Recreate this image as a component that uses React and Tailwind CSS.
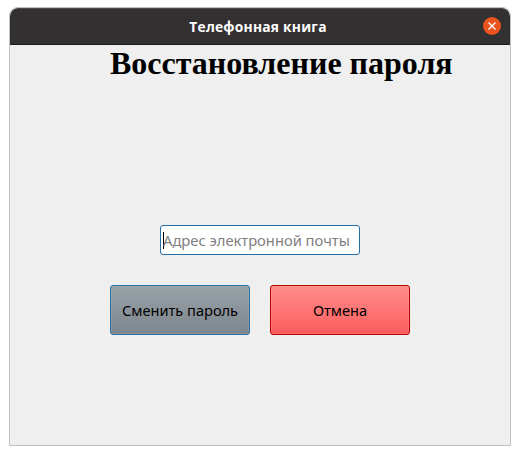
export default function App() {
  return (
    <div className="h-[455px] w-[520px] overflow-hidden bg-white pl-[9px] pt-[7px]">
      <div className="flex h-[439px] w-[502px] flex-col overflow-hidden rounded-t-[9px] border border-[#c0c0c0] bg-[#efefef]">
        <header className="relative flex h-[37px] shrink-0 items-center justify-center rounded-t-[8px] border-b border-t border-b-[#1e1e1e] border-t-[#4a4848] bg-[#333031] pr-[4px]">
          <h1 className="whitespace-nowrap font-['Open_Sans',sans-serif] text-[13.8px] leading-[21px] font-bold tracking-[0.22px] text-white">Телефонная книга</h1>
          <button className="absolute right-[9px] top-[8px] flex size-[18px] items-center justify-center rounded-full bg-[#e95420]">
            <svg viewBox="0 0 8 8" className="size-2" stroke="white" strokeWidth="1.3"><path d="M0.5 0.5 7.5 7.5M7.5 0.5 0.5 7.5" /></svg>
          </button>
        </header>
        <main className="flex flex-col">
          <h2 className="ml-[100px] h-[180px] whitespace-nowrap font-['Liberation_Serif',serif] text-[32px] font-bold leading-[37px] text-black">Восстановление пароля</h2>
          <div className="ml-[150px] flex h-[30px] w-[200px] items-center rounded-[3px] border border-[#2470a3] bg-white pl-[2px]">
            <span className="-mr-px h-[17px] w-px shrink-0 bg-black" />
            <span className="whitespace-nowrap font-['Noto_Sans',sans-serif] text-[14.73px] text-[#808080]">Адрес электронной почты</span>
          </div>
          <div className="ml-[100px] mt-[30px] flex gap-5 font-['Noto_Sans',sans-serif] text-[14.6px] text-black">
            <button className="h-[50px] w-[140px] whitespace-nowrap rounded-[3px] border border-[#2470a3] bg-gradient-to-b from-[#98a3a8] to-[#7e858d] pt-[2px] shadow-[inset_0_0_0_1px_rgba(255,255,255,0.08)]">Сменить пароль</button>
            <button className="h-[50px] w-[140px] rounded-[3px] border border-[#b40000] bg-gradient-to-b from-[#ff8b8b] to-[#fc5c5c] pt-[2px] shadow-[inset_0_0_0_1px_rgba(255,255,255,0.08)]">Отмена</button>
          </div>
        </main>
      </div>
    </div>
  );
}
